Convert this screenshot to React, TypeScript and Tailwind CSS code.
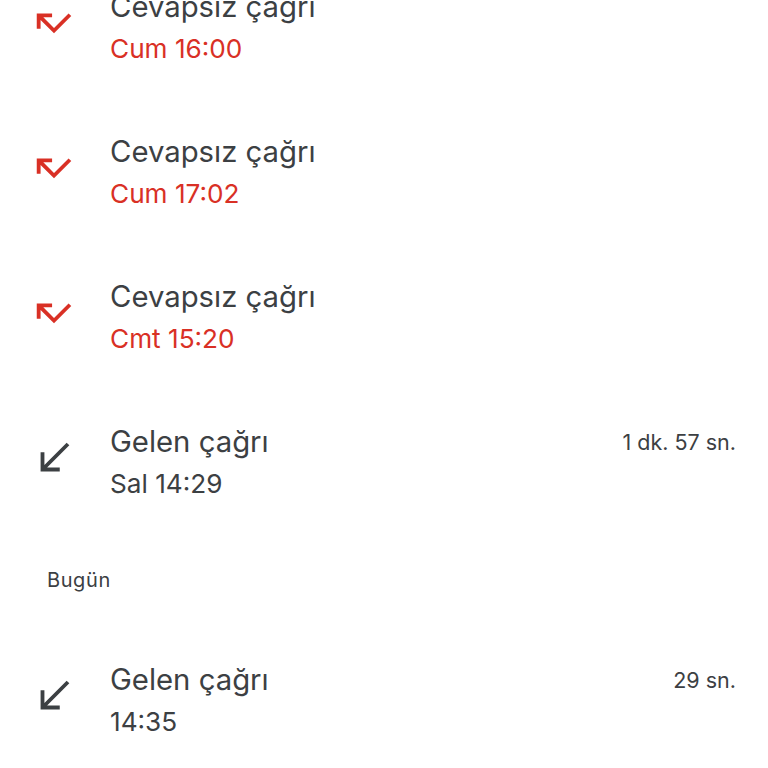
import React from "react";

const MissedIcon = () => (
  <svg viewBox="0 0 24 24" width="46" height="46" fill="#d93025">
    <path d="M19.59 7L12 14.59 6.41 9H11V7H3v8h2v-4.59l7 7 9-9z" />
  </svg>
);

const ReceivedIcon = () => (
  <svg viewBox="0 0 24 24" width="46" height="46" fill="#3c4043">
    <path d="M20 5.41L18.59 4 7 15.59V9H5v10h10v-2H8.41z" />
  </svg>
);

type Row = { missed: boolean; title: string; sub: string; dur?: string };

const CallRow = ({ r }: { r: Row }) => (
  <div className="flex items-start h-[145px]">
    <div className="ml-[31px] mt-[44px] w-[46px] h-[46px] shrink-0">
      {r.missed ? <MissedIcon /> : <ReceivedIcon />}
    </div>
    <div className="ml-[33px] pt-[30px] flex-1 flex items-start">
      <div className="flex-1">
        <div className="text-[29.3px] leading-[42px] text-[#3c4043]">{r.title}</div>
        <div
          className={
            "text-[26.2px] leading-[42px] " +
            (r.missed ? "text-[#d93025]" : "text-[#3c4043]")
          }
        >
          {r.sub}
        </div>
      </div>
      {r.dur && (
        <div className="mr-[32px] text-[21.5px] leading-[42px] text-[#3c4043]">{r.dur}</div>
      )}
    </div>
  </div>
);

export default function App() {
  const rows1: Row[] = [
    { missed: true, title: "Cevapsız çağrı", sub: "Cum 16:00" },
    { missed: true, title: "Cevapsız çağrı", sub: "Cum 17:02" },
    { missed: true, title: "Cevapsız çağrı", sub: "Cmt 15:20" },
    { missed: false, title: "Gelen çağrı", sub: "Sal 14:29", dur: "1 dk. 57 sn." },
  ];
  return (
    <div
      className="w-[768px] h-[768px] overflow-hidden bg-white"
      style={{ fontFamily: "Inter, Roboto, sans-serif" }}
    >
      <div className="-mt-[44.5px]">
        {rows1.map((r, i) => (
          <CallRow key={i} r={r} />
        ))}
        <div className="h-[93px] pl-[47px] pt-[31px] text-[20px] tracking-[0.6px] leading-[26px] text-[#3c4043]">
          Bugün
        </div>
        <CallRow r={{ missed: false, title: "Gelen çağrı", sub: "14:35", dur: "29 sn." }} />
      </div>
    </div>
  );
}
